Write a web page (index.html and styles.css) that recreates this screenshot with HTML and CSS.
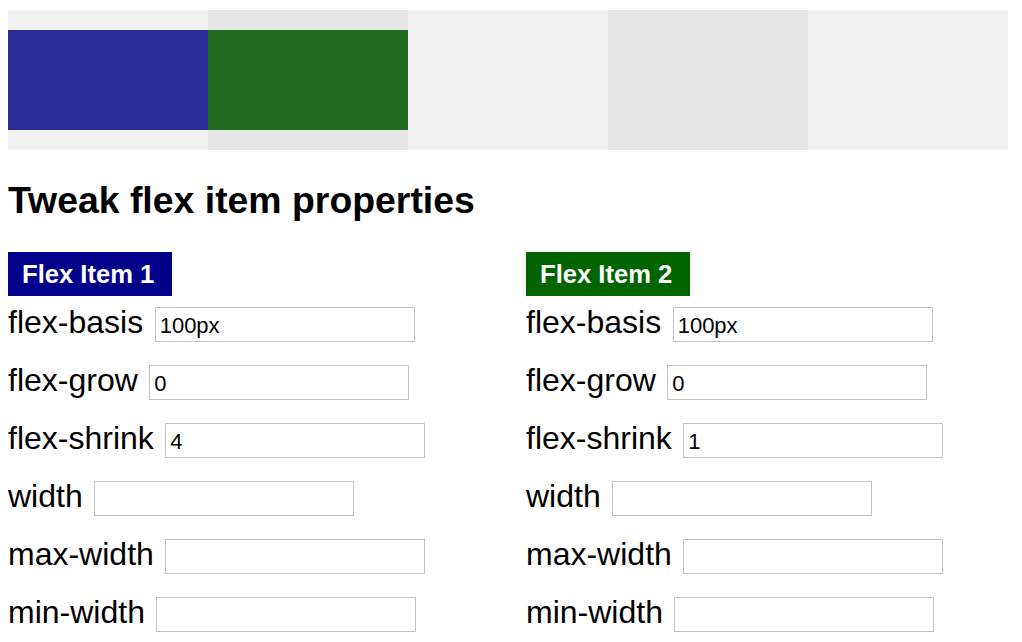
FILE: index.html
```html
<!DOCTYPE html>
<html>
<head>
<meta charset="utf-8">
<link rel="stylesheet" href="styles.css">
</head>
<body>
<div class="container">
  <div class="item item1"></div>
  <div class="item item2"></div>
</div>
<h2 class="title">Tweak flex item properties</h2>
<div class="controls">
  <div class="group">
    <div class="tag tag1">Flex Item 1</div>
    <div class="row"><label>flex-basis</label><input type="text" value="100px"></div>
    <div class="row"><label>flex-grow</label><input type="text" value="0"></div>
    <div class="row"><label>flex-shrink</label><input type="text" value="4"></div>
    <div class="row"><label>width</label><input type="text" value=""></div>
    <div class="row"><label>max-width</label><input type="text" value=""></div>
    <div class="row"><label>min-width</label><input type="text" value=""></div>
  </div>
  <div class="group">
    <div class="tag tag2">Flex Item 2</div>
    <div class="row"><label>flex-basis</label><input type="text" value="100px"></div>
    <div class="row"><label>flex-grow</label><input type="text" value="0"></div>
    <div class="row"><label>flex-shrink</label><input type="text" value="1"></div>
    <div class="row"><label>width</label><input type="text" value=""></div>
    <div class="row"><label>max-width</label><input type="text" value=""></div>
    <div class="row"><label>min-width</label><input type="text" value=""></div>
  </div>
</div>
</body>
</html>
```
FILE: styles.css
```css
html, body {
  background: #ffffff;
}
body {
  margin: 8px;
  font-family: "Liberation Sans", Arial, Helvetica, sans-serif;
  color: #000;
}
.container {
  margin-top: 2px;
  width: 1000px;
  height: 140px;
  display: flex;
  align-items: center;
  background: repeating-linear-gradient(to right, #f1f1f1 0, #f1f1f1 200px, #e5e5e5 200px, #e5e5e5 400px);
}
.item {
  flex: 0 0 200px;
  height: 100px;
}
.item1 { background: #262c93; }
.item2 { background: #1f6a1f; }
.title {
  font-size: 37.4px;
  font-weight: bold;
  margin: 29px 0 0 0;
  line-height: normal;
}
.controls {
  display: grid;
  grid-template-columns: 518px 1fr;
  margin-top: 30px;
}
.tag {
  display: inline-block;
  color: #fff;
  font-weight: bold;
  font-size: 25.6px;
  line-height: 44px;
  height: 44px;
  padding: 0 18px 0 14px;
}
.tag1 { background: #00008b; }
.tag2 { background: #006400; }
.row {
  display: flex;
  align-items: baseline;
  gap: 11.5px;
  font-size: 32px;
  line-height: 37px;
  height: 39px;
  margin-top: 19px;
}
.tag + .row { margin-top: 7.5px; }
.row input {
  width: 250px;
  height: 25px;
  font-family: "Liberation Sans", Arial, Helvetica, sans-serif;
  font-size: 22px;
  line-height: 25px;
  padding: 5px 4px 3px 4px;
  border: 1px solid #c2c2c2;
  margin: 0;
  color: #000;
  background: #fff;
  outline: none;
  box-sizing: content-box;
}
```
